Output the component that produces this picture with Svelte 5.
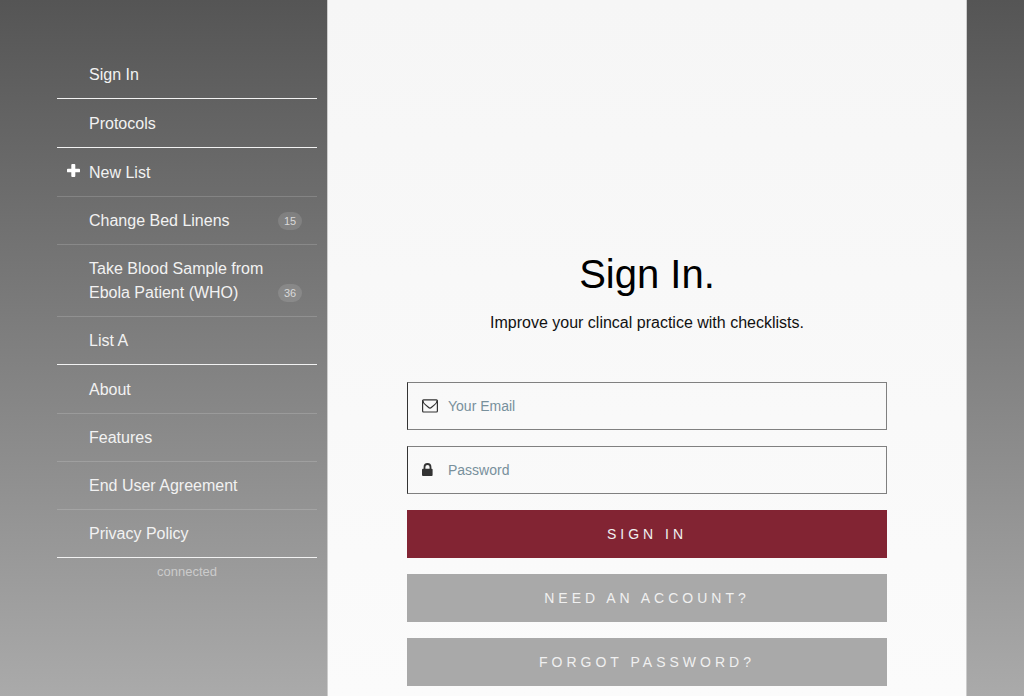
<script>
  const groups = [
    [{ label: 'Sign In' }],
    [{ label: 'Protocols' }],
    [
      { label: 'New List', icon: 'plus' },
      { label: 'Change Bed Linens', count: 15 },
      { label: 'Take Blood Sample from Ebola Patient (WHO)', count: 36 },
      { label: 'List A' }
    ],
    [
      { label: 'About' },
      { label: 'Features' },
      { label: 'End User Agreement' },
      { label: 'Privacy Policy' }
    ]
  ];
</script>

<div class="page">
  <div class="container">
    <nav class="menu">
      {#each groups as group}
        <ul class="group">
          {#each group as item}
            <li>
              <a class="item" href="#top">
                <span class="lead">
                  {#if item.icon}
                    <svg viewBox="0 0 13 13" width="13" height="13" aria-hidden="true">
                      <path d="M5.2 0h2.200a.9.9 0 0 1 .9.9V4.700h3.800a.9.9 0 0 1 .9.9v1.800a.9.9 0 0 1-.9.9H8.300v3.800a.9.9 0 0 1-.9.900H5.200a.9.9 0 0 1-.9-.9V8.300H.9a.9.9 0 0 1-.9-.9V5.600a.9.9 0 0 1 .9-.9h3.400V.9a.9.9 0 0 1 .9-.9z" fill="#fff" />
                    </svg>
                  {/if}
                </span>
                <span class="label">{item.label}</span>
                {#if item.count}<span class="badge">{item.count}</span>{/if}
              </a>
            </li>
          {/each}
        </ul>
      {/each}
      <p class="status">connected</p>
    </nav>

    <main class="panel">
      <div class="auth">
        <h1>Sign In.</h1>
        <p class="subtitle">Improve your clincal practice with checklists.</p>
        <form onsubmit={(e) => e.preventDefault()}>
          <label class="field">
            <span class="glyph">
              <svg viewBox="0 0 16 14" width="16" height="14" aria-hidden="true" fill="none" stroke="#333" stroke-width="1.2">
                <rect x="0.6" y="0.8" width="14.8" height="12.2" rx="1" />
                <path d="M.8 1.500C1 3.800 2.200 4.800 3.600 5.900L6.400 8.300c1 .9 2.200.9 3.200 0L12.400 5.900C13.800 4.800 15 3.800 15.200 1.500" />
              </svg>
            </span>
            <input type="email" placeholder="Your Email" aria-label="Your Email" />
          </label>
          <label class="field">
            <span class="glyph">
              <svg viewBox="0 0 11 14" width="11" height="14" aria-hidden="true">
                <path d="M2.500 7V4a3 3 0 0 1 6 0V7" fill="none" stroke="#333" stroke-width="1.800" />
                <rect y="5.800" width="10.600" height="7.200" rx="1" fill="#333" />
              </svg>
            </span>
            <input type="password" placeholder="Password" aria-label="Password" />
          </label>
          <button class="primary" type="submit">Sign in</button>
          <button type="button">Need an account?</button>
          <button type="button">Forgot password?</button>
        </form>
      </div>
    </main>
  </div>
</div>

<style>
  :global(body) {
    margin: 0;
  }

  .page {
    min-height: 100vh;
    display: flex;
    justify-content: center;
    background: linear-gradient(#555, #aaa);
    font-family: 'Helvetica Neue', 'Liberation Sans', Arial, sans-serif;
    font-size: 16px;
    font-weight: 300;
    line-height: 24px;
  }

  .container {
    display: flex;
    width: 100%;
    max-width: 910px;
  }

  .menu {
    flex: 0 0 260px;
    padding: 50px 10px 0 0;
  }

  .group {
    list-style: none;
    margin: 0;
    padding: 0;
    border-bottom: 1px solid #f2f2f2;
  }

  .item {
    display: flex;
    padding: 13px 15px 11px 0;
    color: #f2f2f2;
    text-decoration: none;
  }

  li + li .item {
    padding-top: 12px;
    border-top: 1px solid rgba(255, 255, 255, 0.16);
  }

  .lead {
    flex: 0 0 32px;
  }

  .lead svg {
    display: block;
    margin: 3px 0 0 10px;
  }

  .label {
    flex: 1;
  }

  .badge {
    align-self: flex-end;
    box-sizing: border-box;
    min-width: 24px;
    margin-bottom: 3px;
    border-radius: 9px;
    background: rgba(255, 255, 255, 0.12);
    color: #d9d9d9;
    font-size: 11px;
    line-height: 18px;
    text-align: center;
  }

  .status {
    margin: 4px 0 0;
    color: #cbcbcb;
    font-size: 13px;
    line-height: 20px;
    text-align: center;
  }

  .panel {
    box-sizing: border-box;
    flex: 1;
    min-width: 0;
    padding: 250px 0 10px;
    border: solid #ccc;
    border-width: 0 1px;
    background: linear-gradient(#f6f6f6, #fbfbfb);
  }

  .auth {
    width: 75%;
    max-width: 480px;
    min-width: min(480px, 100%);
    margin: 0 auto;
    text-align: center;
  }

  h1 {
    margin: 0;
    color: #000;
    font-size: 40px;
    font-weight: 400;
    line-height: 48px;
  }

  .subtitle {
    margin: 13px 0 47px;
    color: #111;
  }

  form {
    display: grid;
    gap: 16px;
  }

  .field {
    box-sizing: border-box;
    display: flex;
    align-items: center;
    height: 48px;
    padding-left: 14px;
    border: 1px solid #808080;
    border-left-color: #333;
  }

  .glyph {
    flex: 0 0 26px;
  }

  .glyph svg {
    display: block;
  }

  input {
    flex: 1;
    min-width: 0;
    height: 100%;
    padding: 0;
    border: 0;
    outline: 0;
    background: none;
    color: #333;
    font: inherit;
    font-size: 14px;
  }

  input::placeholder {
    color: #78909c;
    opacity: 1;
  }

  button {
    height: 48px;
    padding: 0;
    border: 0;
    border-radius: 0;
    background: #a9a9a9;
    color: #f0f0f0;
    font: inherit;
    font-size: 14px;
    letter-spacing: 4px;
    text-transform: uppercase;
    cursor: pointer;
  }

  .primary {
    background: #822433;
  }
</style>
